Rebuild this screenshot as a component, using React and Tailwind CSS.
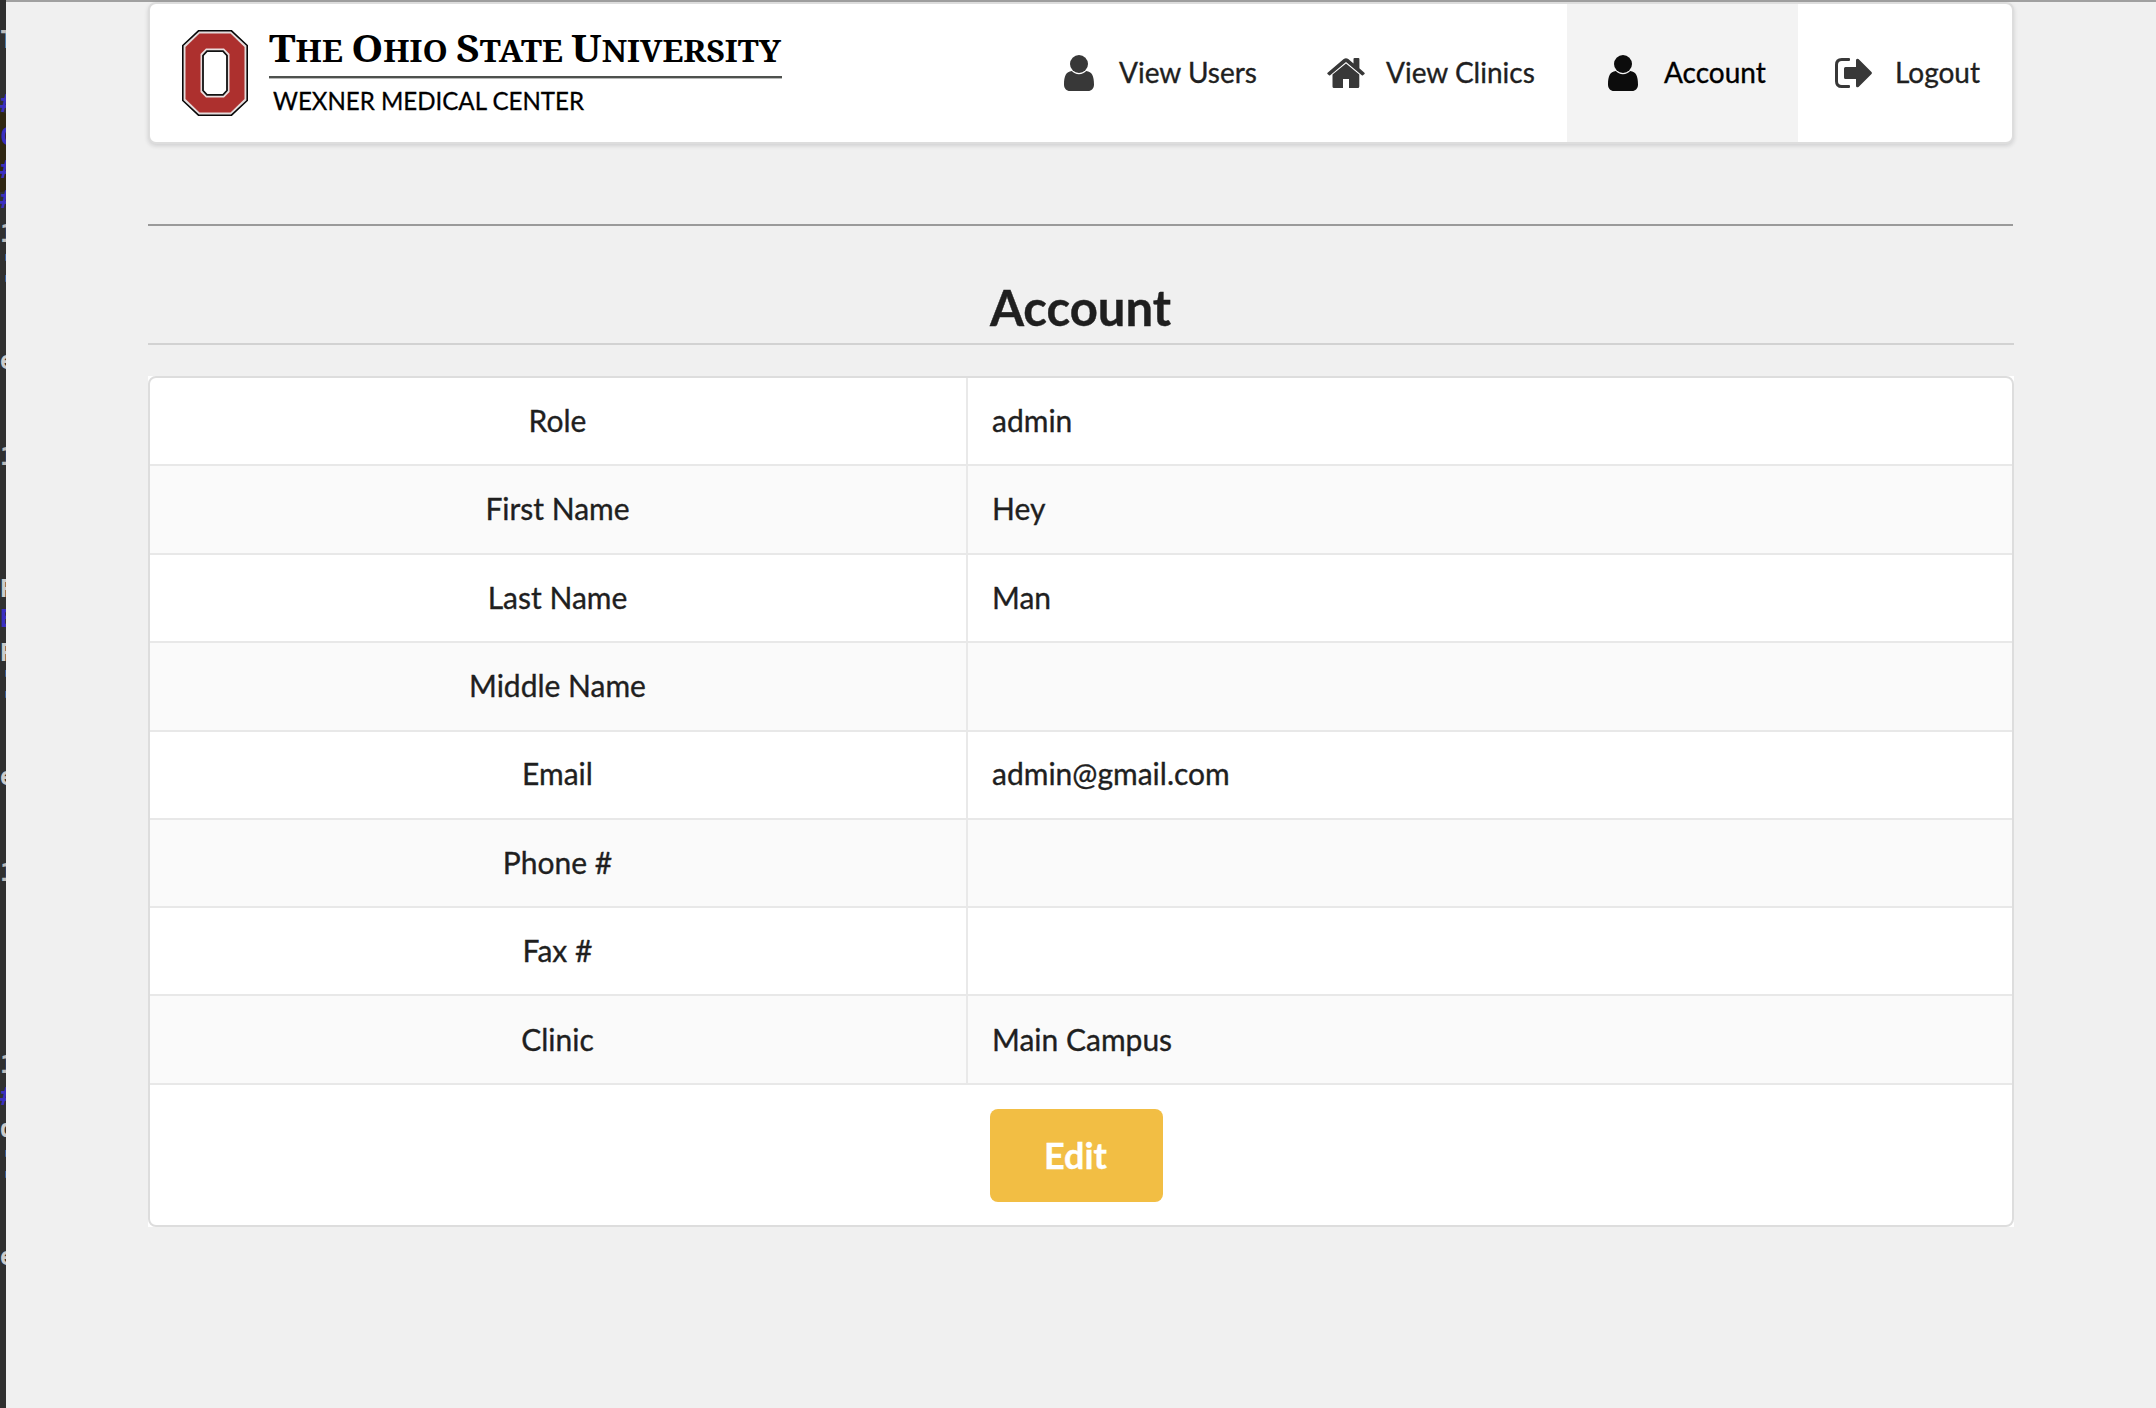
import React from "react";

const rows = [
  ["Role", "admin", "h-[86px]", "pb-0.5"],
  ["First Name", "Hey", "h-[89px]", "pb-[3px]"],
  ["Last Name", "Man", "h-[88px]", "pb-0.5"],
  ["Middle Name", "", "h-[89px]", "pb-[3px]"],
  ["Email", "admin@gmail.com", "h-[88px]", "pb-[4px]"],
  ["Phone #", "", "h-[88px]", "pb-0.5"],
  ["Fax #", "", "h-[88px]", "pb-0.5"],
  ["Clinic", "Main Campus", "h-[89px]", "pb-0.5"],
];

const User = () => (
  <svg viewBox="0 0 30 36" className="h-9 w-[30px]" fill="currentColor">
    <circle cx="15" cy="9" r="9" />
    <path d="M7.8 16C2 16.500 0 21 0 29.500C0 33.500 2.500 36 6 36H24C27.500 36 30 33.500 30 29.500C30 21 28 16.500 22.200 16C20.500 18 18 19.200 15 19.200C12 19.200 9.500 18 7.800 16Z" />
  </svg>
);

const Home = () => (
  <svg viewBox="0 0 38 30" className="h-[30px] w-[38px]" fill="currentColor">
    <path d="M19 5.600L32.300 16.500V28.500Q32.300 30 30.800 30H22V21H16V30H7Q5.500 30 5.500 28.500V16.500Z" />
    <path d="M.6 14.800L16.700 1.100Q19 -.8 21.300 1.100L26.500 5.500V1Q26.500 0 27.500 0H31.500Q32.400 0 32.400 1V10.300L37.400 14.800Q38 15.400 37.500 16L36 17.300Q35.400 17.800 34.800 17.300L19 4L3.200 17.300Q2.600 17.800 2 17.300L.5 16Q0 15.400 .6 14.800Z" />
  </svg>
);

const Exit = () => (
  <svg viewBox="0 0 37 30" className="h-[30px] w-[37px]" fill="currentColor">
    <path d="M14 0H6.800Q0 0 0 6.800V23.200Q0 30 6.800 30H14Q15 30 15 29V28Q15 27 14 27H6.800Q3 27 3 23.200V6.800Q3 3 6.800 3H14Q15 3 15 2V1Q15 0 14 0Z" />
    <path d="M36.500 14L23.500 1Q21 0 21 2.200V9H10.500Q9 9 9 10.500V19.500Q9 21 10.500 21H21V27.800Q21 30 23.500 29L36.500 16Q37.300 15 36.500 14Z" />
  </svg>
);

// Sliver of the editor window that shows behind the page's left edge.
const strip = [
  ["T", 40, "#bbb"], ["#", 104, "#3b2fc0"], ["C", 137, "#3b2fc0"], ["#", 170, "#3b2fc0"], ["#", 200, "#3b2fc0"],
  ["1", 234, "#bbb"], ["'", 264, "#9bc"], ["'", 285, "#9bc"], ["e", 361, "#ccc"], ["1", 457, "#bbb"],
  ["P", 589, "#ccc"], ["E", 619, "#3b2fc0"], ["P", 653, "#ccc"], ["'", 680, "#9bc"], ["'", 701, "#9bc"],
  ["e", 777, "#ccc"], ["1", 873, "#bbb"], ["1", 1065, "#bbb"], ["#", 1097, "#3b2fc0"], ["d", 1129, "#ccc"],
  ["'", 1160, "#9bc"], ["'", 1181, "#9bc"], ["e", 1257, "#ccc"],
];

export default function App() {
  return (
    <div className="flex h-[1408px] w-[2156px] overflow-hidden bg-[#f0f0f0] font-['Lato',sans-serif] text-[#1f1f1f]">
      <aside className="relative w-1.5 shrink-0 overflow-hidden bg-[#303030]">
        <div className="absolute top-[112px] -left-3 h-20 w-6 rounded-full bg-[#302712]" />
        {strip.map(([c, y, color]) => (
          <span key={y} className="absolute left-0 -translate-y-1/2 font-['DejaVu_Sans_Mono',monospace] text-[24px] leading-none font-bold" style={{ top: y, color }}>{c}</span>
        ))}
      </aside>
      <main className="flex-1 border-t-2 border-[#a0a0a0] px-[142px]">
        <nav className="flex h-[142px] items-stretch overflow-hidden rounded-lg border-2 border-[#dddddd] bg-white text-[28px] leading-[34px] shadow-[0_2px_4px_rgba(34,36,38,0.15)]">
          <div className="flex pt-[26px] pl-8">
            <svg viewBox="0 0 66 86" className="h-[86px] w-[66px]">
              <path d="M16.500 .8H49.500L65.200 15.500V70.500L49.500 85.200H16.500L.8 70.500V15.500Z" fill="#e4dcdc" stroke="#080808" strokeWidth="1.600" />
              <path d="M17.500 3.500H48.500L62.500 17V69L48.500 82.500H17.500L3.500 69V17Z" fill="#ad302e" />
              <path d="M24 18.500H42L47.500 24V62L42 67.500H24L18.500 62V24Z" fill="#eadede" />
              <path d="M25 21.200H41L45 25.500V60.500L41 64.800H25L21 60.500V25.500Z" fill="white" stroke="#111" strokeWidth="1.800" />
            </svg>
            <svg viewBox="0 0 514 86" className="ml-[21px] h-[86px] w-[514px]" fill="#000">
              <text x="0" y="31.800" fontFamily="'Noto Serif','DejaVu Serif',serif" fontWeight="bold" fontSize="38" textLength="512" lengthAdjust="spacingAndGlyphs">T<tspan fontSize="30">HE </tspan>O<tspan fontSize="30">HIO </tspan>S<tspan fontSize="30">TATE </tspan>U<tspan fontSize="30">NIVERSITY</tspan></text>
              <rect x="0" y="46" width="513" height="2.400" fill="#4e514e" />
              <text x="4" y="79.700" fontFamily="Lato" fontSize="25.500" stroke="#000" strokeWidth=".3" textLength="311" lengthAdjust="spacingAndGlyphs">WEXNER MEDICAL CENTER</text>
            </svg>
          </div>
          <div className="ml-auto flex [-webkit-text-stroke:0.35px_currentColor]">
            <a className="flex w-[270px] items-center pl-[34px]"><span className="w-[55px] text-[#383838]"><User /></span><span className="pb-0.5">View Users</span></a>
            <a className="flex w-[267px] items-center pl-[27px]"><span className="w-[59px] text-[#383838]"><Home /></span><span className="pb-0.5">View Clinics</span></a>
            <a className="flex w-[231px] items-center bg-[#f3f3f3] pl-[41px] text-black"><span className="w-[56px] text-[#0c0c0c]"><User /></span><span className="pb-0.5">Account</span></a>
            <a className="flex w-[214px] items-center pl-[37px]"><span className="w-[60px] text-[#383838]"><Exit /></span><span className="pb-0.5">Logout</span></a>
          </div>
        </nav>
        <div className="mt-20 mr-px h-0.5 bg-[#9a9a9a]" />
        <h1 className="flex h-[119px] items-end justify-center border-b-2 border-[#d2d2d2] pr-px pb-1.5 text-[49px] leading-[60px] font-bold [-webkit-text-stroke:0.4px_currentColor]">Account</h1>
        <div className="mt-[31px] bg-white">
          <div className="h-[851px] overflow-hidden rounded-lg border-2 border-[#dddddd] bg-white text-[30px] leading-[40px] [-webkit-text-stroke:0.35px_currentColor]">
            {rows.map(([label, value, height, nudge], i) => (
              <div key={label} className={`${height} flex ${i ? "border-t-2 border-[#e8e8e8]" : ""} ${i % 2 ? "bg-[#fafafa]" : ""}`}>
                <div className={`flex w-[818px] items-center justify-center border-r-2 border-[#e9e9e9] pr-px ${nudge}`}>{label}</div>
                <div className={`flex flex-1 items-center pl-6 ${nudge}`}>{value}</div>
              </div>
            ))}
            <div className="flex border-t-2 border-[#e8e8e8] pt-6 pl-[840px]">
              <button className="h-[93px] w-[173px] rounded-lg bg-[#f2be44] pr-0.5 pb-0.5 text-[36px] font-bold text-white">Edit</button>
            </div>
          </div>
        </div>
      </main>
    </div>
  );
}
